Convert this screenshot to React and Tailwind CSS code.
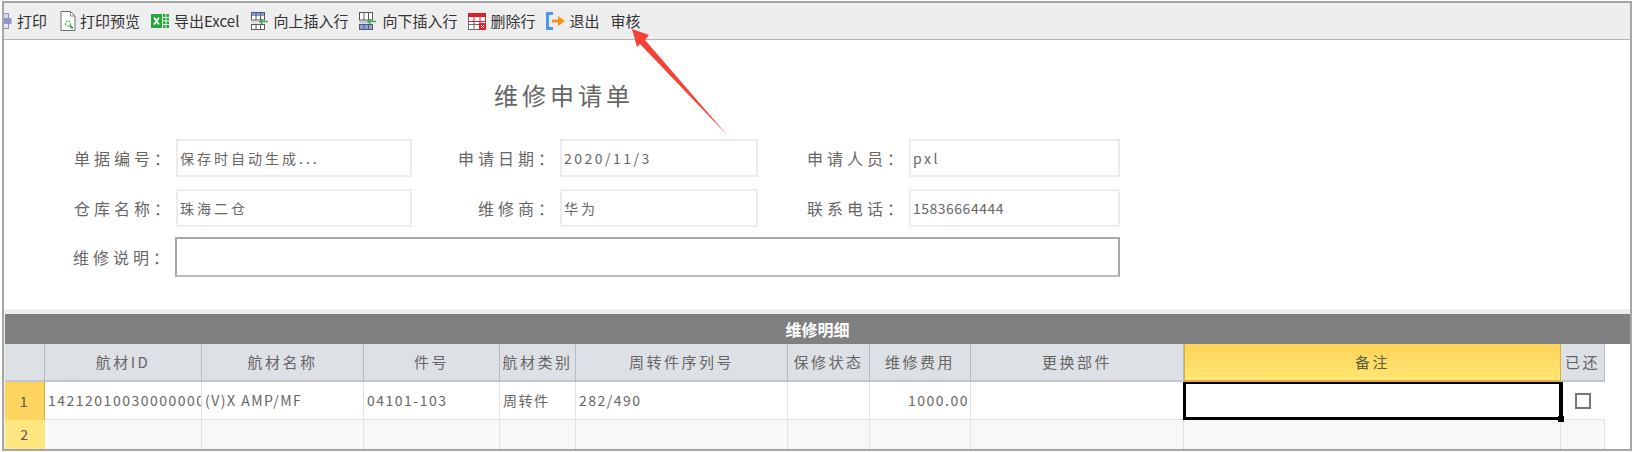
const CJK = "font-['Noto_Sans_CJK_SC','Liberation_Sans',sans-serif]";
const COLS = "grid grid-cols-[40px_157px_162px_136px_76px_212px_82px_101px_213px_377px_44px] w-[1600px]";

function PrintIcon() {
  return (
    <svg width="16" height="16" viewBox="0 0 16 16" className="ml-[-8px] shrink-0">
      <rect x="3.5" y="0.5" width="9" height="5" fill="#d8d8ec" stroke="#9090c8" />
      <rect x="0.5" y="5" width="15" height="6" fill="#9292d0" />
      <rect x="3.5" y="10.5" width="9" height="5" fill="#e6e6f4" stroke="#9090c8" />
    </svg>
  );
}

function PreviewIcon() {
  return (
    <svg width="16" height="20" viewBox="0 0 16 20" className="shrink-0">
      <path d="M1 0.5h9.5l4.5 4.5v14.5h-14z" fill="#fff" stroke="#6e6e6e" />
      <path d="M10.5 0.5v4.5h4.5" fill="none" stroke="#8a8a8a" />
      <circle cx="8" cy="12.5" r="2.5" fill="none" stroke="#4cb063" strokeWidth="1.2" strokeDasharray="2 1" />
      <path d="M9.8 14.5l3 3" stroke="#2f9e4f" strokeWidth="1.8" />
    </svg>
  );
}

function ExcelIcon() {
  return (
    <svg width="18" height="16" viewBox="0 0 18 16" className="shrink-0">
      <rect x="0" y="1" width="11" height="14" fill="#25a83a" />
      <path d="M3 4.5l5 7M8 4.5l-5 7" stroke="#fff" strokeWidth="1.7" />
      <rect x="12" y="1" width="6" height="14" fill="#25a83a" />
      <path d="M12 4.5h6M12 8h6M12 11.5h6M15 1v14" stroke="#fff" strokeWidth="0.9" />
    </svg>
  );
}

function InsertIcon({ down }) {
  return (
    <svg width="18" height="18" viewBox="0 0 18 18" className="shrink-0">
      <rect x="0.5" y="0.5" width="13" height="7.5" fill="#fff" stroke="#5a5a5a" />
      <rect x="1" y="1" width="12" height="3" fill={down ? "#fff" : "#7f9cdc"} />
      <path d="M5 0.5v7.5M9.5 0.5v7.5" stroke="#5a5a5a" />
      <rect x="0.5" y="9" width="9" height="2.5" fill={down ? "#b9c6e4" : "#d9d9d9"} />
      <path d="M9 9.5h8" stroke="#3fa652" strokeWidth="1.5" />
      <path d="M11.5 7l-2.5 2.5 2.5 2.5" fill="none" stroke="#3fa652" strokeWidth="1.5" />
      <rect x="0.5" y="12.5" width="13" height="5" fill={down ? "#8aa4dc" : "#fff"} stroke="#5a5a5a" />
      <path d="M5 12.5v5M9.5 12.5v5" stroke="#5a5a5a" />
    </svg>
  );
}

function DeleteIcon() {
  return (
    <svg width="18" height="17" viewBox="0 0 18 17" className="shrink-0">
      <rect x="0.5" y="0.5" width="17" height="16" fill="#fff" stroke="#6a6a6a" />
      <rect x="0" y="0" width="18" height="4" fill="#d9202b" />
      <path d="M0 8.5h18M6 0v11M12 0v11" stroke="#d9202b" />
      <path d="M0 11.5h11M6 11v6" stroke="#6a6a6a" />
      <rect x="11" y="10" width="7" height="7" fill="#ea1f2a" />
      <path d="M13 12l3 3M16 12l-3 3" stroke="#fff" />
    </svg>
  );
}

function ExitIcon() {
  return (
    <svg width="20" height="18" viewBox="0 0 20 18" className="shrink-0">
      <path d="M7 1.5H1.5v15H7" fill="none" stroke="#4a97f2" strokeWidth="3" />
      <path d="M6 7.5h6V4l7 5-7 5v-3.5H6z" fill="#f7931e" />
    </svg>
  );
}

const tools = [
  { text: "打印", icon: <PrintIcon />, cls: "ml-0", gap: "gap-[5px]" },
  { text: "打印预览", icon: <PreviewIcon />, cls: "ml-[13px]", gap: "gap-[4px]" },
  { text: "导出Excel", icon: <ExcelIcon />, cls: "ml-[11px]", gap: "gap-[5px]" },
  { text: "向上插入行", icon: <InsertIcon />, cls: "ml-[12px]", gap: "gap-[4px]" },
  { text: "向下插入行", icon: <InsertIcon down />, cls: "ml-[11px]", gap: "gap-[5px]" },
  { text: "删除行", icon: <DeleteIcon />, cls: "ml-[11px]", gap: "gap-[4px]" },
  { text: "退出", icon: <ExitIcon />, cls: "ml-[11px]", gap: "gap-[3px]" },
  { text: "审核", icon: null, cls: "ml-[11px]", gap: "" },
];

function Label({ w, children }) {
  return <div className={`${w} shrink-0 text-right text-[16px] tracking-[4px] text-[#666] pr-[2px]`}>{children}</div>;
}

function Field({ w, track = "tracking-[3px]", children }) {
  return (
    <div className={`${w} ${track} h-[38px] shrink-0 border-2 border-[#ececec] flex items-center pl-[2px] text-[14px] text-[#666] overflow-hidden whitespace-nowrap`}>
      {children}
    </div>
  );
}

const headers = ["", "航材ID", "航材名称", "件号", "航材类别", "周转件序列号", "保修状态", "维修费用", "更换部件", "备注", "已还"];
const row1 = ["14212010030000000000", "(V)X AMP/MF", "04101-103", "周转件", "282/490", "", "1000.00", ""];

export default function App() {
  return (
    <div className={`w-[1636px] h-[452px] bg-white overflow-hidden relative ${CJK}`}>
      <div className="ml-[2px] mt-[1px] w-[1630px] h-[450px] border-2 border-[#a6a6a6] flex flex-col overflow-hidden">
        {/* toolbar */}
        <div className="h-[37px] shrink-0 bg-[#eeeeee] border-b border-[#b4b4b4] flex items-center text-[15px] text-[#333] whitespace-nowrap">
          {tools.map((t) => (
            <div key={t.text} className={`flex items-center ${t.gap} ${t.cls}`}>
              {t.icon}
              <span>{t.text}</span>
            </div>
          ))}
        </div>

        {/* form */}
        <div className="h-[269px] shrink-0 bg-white flex flex-col">
          <div className="h-[99px] shrink-0 pt-[11px] pl-[490px] flex items-center text-[24px] tracking-[4px] text-[#666]">
            维修申请单
          </div>
          <div className="flex items-center">
            <Label w="w-[172px]">单据编号：</Label>
            <Field w="w-[236px]">保存时自动生成...</Field>
            <Label w="w-[148px]">申请日期：</Label>
            <Field w="w-[198px]" track="tracking-[2.5px]">2020/11/3</Field>
            <Label w="w-[151px]">申请人员：</Label>
            <Field w="w-[211px]" track="tracking-[2.5px]">pxl</Field>
          </div>
          <div className="flex items-center mt-[12px]">
            <Label w="w-[172px]">仓库名称：</Label>
            <Field w="w-[236px]">珠海二仓</Field>
            <Label w="w-[148px]">维修商：</Label>
            <Field w="w-[198px]">华为</Field>
            <Label w="w-[151px]">联系电话：</Label>
            <Field w="w-[211px]" track="tracking-[0.5px]">15836664444</Field>
          </div>
          <div className="flex items-center mt-[10px]">
            <Label w="w-[171px]">维修说明：</Label>
            <div className="w-[945px] h-[40px] border-2 border-[#a8a8a8] border-b-[#bdbdbd] bg-white" />
          </div>
        </div>

        {/* details */}
        <div className="flex-1 bg-[#eeeeee] pt-[5px] pl-[1px]">
          <div className="h-[30px] bg-[#808080] flex items-center justify-center text-[16px] font-bold text-white">
            维修明细
          </div>
          <div className="bg-white h-[105px] overflow-hidden text-[14px] tracking-[1.5px] text-[#666]">
            <div className={`${COLS} h-[38px] text-[15px] tracking-[2.5px]`}>
              {headers.map((h, i) => (
                <div
                  key={i}
                  className={
                    h === "备注"
                      ? "flex items-center justify-center bg-gradient-to-b from-[#fed259] to-[#ffe873] border-b-2 border-x border-[#e0ac45] text-[#5f5f3c]"
                      : "flex items-center justify-center whitespace-nowrap overflow-hidden bg-[#dde0e5] border-b-2 border-b-[#c3c6cc] border-r border-r-[#b7bbc2]"
                  }
                >
                  {h}
                </div>
              ))}
            </div>
            <div className={`${COLS} h-[38px]`}>
              <div className="flex items-center justify-center bg-gradient-to-b from-[#fed35c] to-[#fdd560] border-r border-[#e0a83c] text-[#555]">1</div>
              {row1.map((v, i) => (
                <div
                  key={i}
                  className={`flex items-center whitespace-nowrap overflow-hidden border-r border-b border-[#e2e2e2] ${i === 6 ? "justify-end pr-[1px]" : "pl-[3px]"}`}
                >
                  {v}
                </div>
              ))}
              <div className="relative border-b border-[#e2e2e2]">
                <div className="absolute -left-[1px] -right-[2px] top-0 -bottom-[1px] border-black border-t-2 border-l-[3px] border-r-[4px] border-b-[3px]" />
                <div className="absolute -right-[3px] -bottom-[3px] w-[6px] h-[6px] bg-black" />
              </div>
              <div className="flex items-center justify-center border-b border-[#e2e2e2]">
                <div className="w-[16px] h-[16px] border-2 border-[#777] bg-white" />
              </div>
            </div>
            <div className={`${COLS} h-[29px] bg-[#f8f8f8]`}>
              <div className="flex items-center justify-center bg-[#ffe680] text-[#555]">2</div>
              {Array.from({ length: 10 }).map((_, i) => (
                <div key={i} className="border-r border-[#e2e2e2]" />
              ))}
            </div>
          </div>
        </div>
      </div>

      {/* annotation arrow */}
      <svg className="absolute left-0 top-0 pointer-events-none" width="1636" height="452">
        <polygon points="632,29 649,35 645,40 728,136 640,44 637,47" fill="#f44336" />
      </svg>
    </div>
  );
}
